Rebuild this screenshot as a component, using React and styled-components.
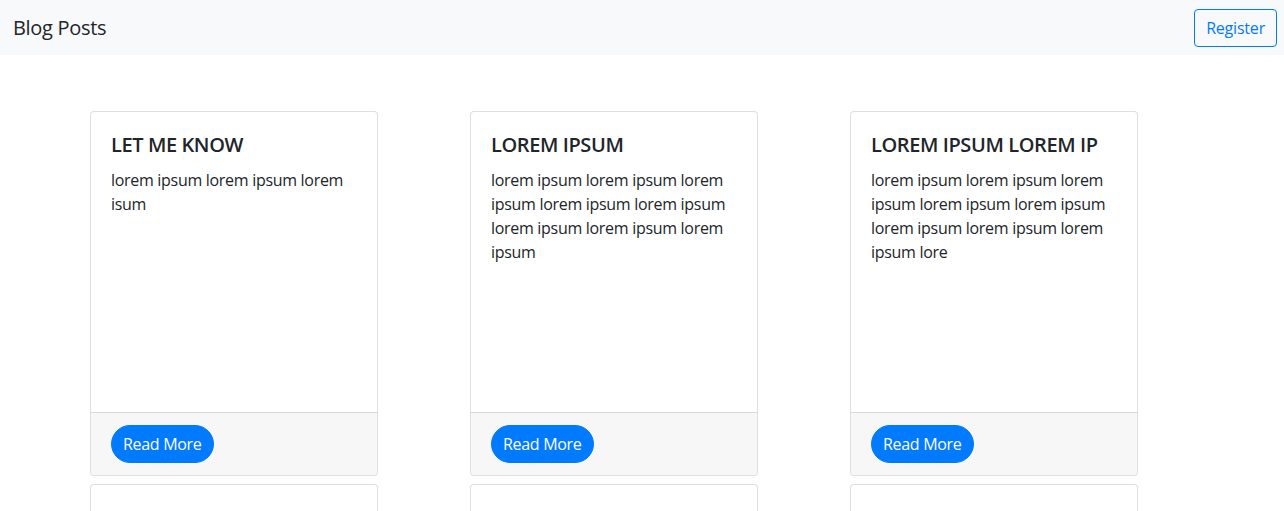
import styled, { createGlobalStyle } from "styled-components";

const GlobalStyle = createGlobalStyle`
	body {
		margin: 0;
		background: #fff;
		color: #212529;
		font-family: "Open Sans", "Noto Sans", sans-serif;
		font-size: 16px;
		line-height: 1.5;
	}
`;

const posts = [
	{ title: "Let me know", body: "lorem ipsum lorem ipsum lorem isum" },
	{
		title: "Lorem ipsum",
		body: "lorem ipsum lorem ipsum lorem ipsum lorem ipsum lorem ipsum lorem ipsum lorem ipsum lorem ipsum",
	},
	{
		title: "Lorem ipsum lorem ip",
		body: "lorem ipsum lorem ipsum lorem ipsum lorem ipsum lorem ipsum lorem ipsum lorem ipsum lorem ipsum lore",
	},
	{ title: "", body: "" },
	{ title: "", body: "" },
	{ title: "", body: "" },
];

const App = () => {
	return (
		<>
			<GlobalStyle />
			<Navbar>
				<Brand>Blog Posts</Brand>
				<OutlineButton>Register</OutlineButton>
			</Navbar>
			<Container>
				<CardGrid>
					{posts.map((post, i) => (
						<Card key={i}>
							<CardBody>
								<CardTitle>{post.title}</CardTitle>
								<CardText>{post.body}</CardText>
							</CardBody>
							<CardFooter>
								<PillButton>Read More</PillButton>
							</CardFooter>
						</Card>
					))}
				</CardGrid>
			</Container>
		</>
	);
};

export default App;

const Navbar = styled.nav`
	display: flex;
	justify-content: space-between;
	align-items: center;
	height: 55px;
	box-sizing: border-box;
	padding: 0 7px 0 13px;
	background: #f8f9fa;
`;

const Brand = styled.a`
	font-size: 20px;
	line-height: 30px;
	letter-spacing: -0.3px;
	color: #212529;
	text-decoration: none;
`;

const OutlineButton = styled.button`
	height: 38px;
	padding: 0 11px;
	font-family: inherit;
	font-size: 16px;
	letter-spacing: -0.2px;
	color: #007bff;
	background: transparent;
	border: 1px solid #007bff;
	border-radius: 4px;
	cursor: pointer;
`;

const Container = styled.main`
	width: 1140px;
	margin: 0 auto;
	padding: 56px 0 0 18px;
	box-sizing: border-box;
`;

const CardGrid = styled.div`
	display: grid;
	grid-template-columns: repeat(3, 288px);
	column-gap: 92px;
	row-gap: 8px;
`;

const Card = styled.div`
	display: flex;
	flex-direction: column;
	border: 1px solid rgba(0, 0, 0, 0.125);
	border-radius: 4px;
	overflow: hidden;
	background: #fff;
`;

const CardBody = styled.div`
	height: 300px;
	box-sizing: border-box;
	padding: 21px 20px 20px;
`;

const CardTitle = styled.h5`
	margin: 0 0 11px;
	min-height: 24px;
	font-size: 20px;
	font-weight: 600;
	line-height: 1.2;
	letter-spacing: -0.4px;
	text-transform: uppercase;
`;

const CardText = styled.p`
	margin: 0;
	letter-spacing: -0.3px;
`;

const CardFooter = styled.div`
	padding: 12px 20px;
	background: #f7f7f7;
	border-top: 1px solid rgba(0, 0, 0, 0.125);
`;

const PillButton = styled.button`
	height: 38px;
	padding: 0 11px;
	font-family: inherit;
	font-size: 16px;
	letter-spacing: -0.3px;
	color: #fff;
	background: #007bff;
	border: 1px solid #007bff;
	border-radius: 50rem;
	cursor: pointer;
`;
